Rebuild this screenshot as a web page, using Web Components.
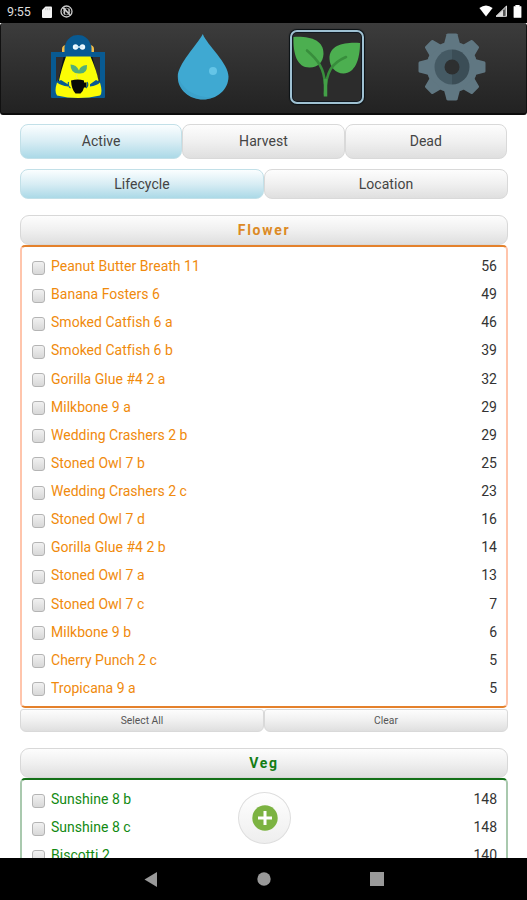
<!DOCTYPE html>
<html lang="en">
<head>
<meta charset="utf-8">
<title>Plants</title>
<style>
html,body{margin:0;height:100%;overflow:hidden}
body{font-family:Roboto,"Liberation Sans",sans-serif;background:#fff}
</style>
</head>
<body>
<plant-app></plant-app>
<script>
function define(name, html, setup) {
  const template = document.createElement('template');
  template.innerHTML = html;
  customElements.define(name, class extends HTMLElement {
    constructor() {
      super();
      this.attachShadow({mode: 'open'}).append(template.content.cloneNode(true));
    }
    connectedCallback() { if (setup) setup(this, this.shadowRoot); }
  });
}

define('status-bar', `<style>
:host{display:flex;height:23px;background:#000;color:#ddd;align-items:center;box-sizing:border-box;padding:0 5px 0 7px;font-size:12.5px;line-height:23px}
.time{width:35px;letter-spacing:-.1px}.left{flex:1;display:flex;gap:8px;align-items:center}
svg{display:block}.right{display:flex;gap:2px;align-items:center;margin-top:-1px}
</style><span class="time">9:55</span>
<div class="left"><svg width="10" height="12" viewBox="0 0 10 12"><path d="M3.5.5H9q1 0 1 1v9.500q0 1-1 1H1q-1 0-1-1V4z" fill="#f4f4f4"/><path d="M3.800 2v2.200M5.800 2v2.200M7.800 2v2.200" stroke="#bbb" stroke-width=".8"/></svg>
<svg width="13" height="13" viewBox="0 0 13 13" fill="none" stroke="#ccc"><circle cx="6.500" cy="6.500" r="5.500" stroke-width="1.300"/><path d="M2.500 2.500l8 8M4.500 9.500v-6l4.500 5.500v-5.500" stroke-width="1.300"/><circle cx="6.500" cy="6.500" r="3.300" stroke-width=".6"/></svg></div>
<div class="right"><svg width="14" height="12" viewBox="0 0 14 12"><path d="M.4 3Q7-2.200 13.600 3L7 11.500z" fill="#fff"/></svg>
<svg width="13" height="12" viewBox="0 0 13 12"><path d="M1 11.300L11.500 1v10.300z" fill="#888" stroke="#ddd"/><path d="M1 11.500L8 5v6.500z" fill="#ddd"/><path d="M9 5v6" stroke="#222"/></svg>
<svg width="9" height="13" viewBox="0 0 10 13" preserveAspectRatio="none" style="margin-left:3px"><path d="M3 0h4v1.500h2v11H1v-11h2z" fill="#fff" stroke="#fff" stroke-linejoin="round" stroke-width=".6"/></svg></div>`);

define('icon-lantern', `<style>:host{display:block}svg{display:block}</style>
<svg width="56" height="66" viewBox="0 0 56 66">
<path fill="#085a92" d="M1 18h54v45q0 1-1 1H2q-1 0-1-1z"/>
<path fill="#302f31" d="M6 23h10L9 44l-3 4zM40 23h10v25l-3-4z"/>
<path fill="#071318" d="M13.500 23H17L11 45l-3 3zM39 23h3.500l6 25-4-3z"/>
<path fill="#f3bd49" d="M17 11q-5 0-5 4v3h5zM39 11q5 0 5 4v3h-5z"/>
<path fill="#085a92" d="M14.500 20V13C17 4 22 1 28 1s11 3 13.500 12v7z"/>
<circle cx="25.500" cy="13" r="2.700" fill="#edf9ff"/><circle cx="32.500" cy="13" r="2.700" fill="#edf9ff"/><path d="M25 13h8" stroke="#cfe8f5" stroke-width="1.500"/>
<path fill="#fbfd05" d="M16 22.500h24.500q6 14 8 24l-10 6H18l-9-6q2-10 7-24z"/>
<path fill="#085a92" d="M7 48l4-2 8 5h20l7-5 4 2v7q-20 8-43 0z"/>
<path fill="#fbfd05" d="M7 48.500q4 3 11 4v-5h22v5q7-1 10-4 3 10 0 13-22 5-43 0-3-4 0-13z"/>
<path fill="#53ae78" d="M20.500 30.500q6 0 8.500 6 1-5 8-5.500.5 9-7.500 8.500-9 .5-9-9z"/><path d="M28 45q-3-2-1-5" fill="none" stroke="#d9e37b" stroke-width=".8"/>
<path fill="#080b08" d="M21 46.500q7-2 13 0v2h2.500v5H34q-.5 3-3.500 6h-5q-4-4-4.500-13z"/><path d="M18.500 48q-1 4 2 6M37 48q2 3-1 6" fill="none" stroke="#085a92" stroke-width="1.200"/>
</svg>`);
define('icon-drop', `<style>:host{display:block}svg{display:block}</style>
<svg width="52" height="68" viewBox="0 0 52 68"><path fill="#3fa9d2" d="M25.800 1C30 12 51.500 30 51.500 43.500c0 13.500-12 23-25.500 23S.8 57 .8 43.500C.8 31 20 12 25.800 1z"/><path fill="#399cc4" d="M1 39C1 56 21 66 37 64 22 71 3 61 1 47z" opacity=".5"/><circle cx="36" cy="38" r="4" fill="#65c5e7"/></svg>`);
define('icon-sprout', `<style>:host{display:block;box-sizing:border-box;width:74px;height:74px;border:2.500px solid #9fc1d2;border-radius:7px;background:#2c2c2c;box-shadow:0 0 1px 1px #0b1115,inset 0 0 0 1px #101820}svg{display:block}</style>
<svg width="69" height="69" viewBox="0 0 69 69"><path fill="#4caf50" d="M1.500 5C18 4 32 8 31.500 22c-.5 8-5 13.500-14 13.500C5 35.500 1 22 1.500 5zM68 11C54 10 37 12 37.500 27c.5 8 6 14.500 14 14.500C63 41 68 28 68 11z"/>
<path fill="none" stroke="#388e3c" stroke-width="2.600" stroke-linecap="round" d="M15 18.500C26 28 32 36 33 52M54 25C40 31 34 39 33 62"/><path d="M33.500 47v17.500" stroke="#43a047" stroke-width="3.500"/></svg>`);
define('icon-gear', `<style>:host{display:block}svg{display:block}</style>
<svg width="68" height="68" viewBox="-34 -34 68 68"><g class="teeth" fill="#607782"></g><path d="M0-17.500a17.500 17.500 0 0 0 0 35z" fill="#455a64"/><path d="M0-17.500a17.500 17.500 0 0 1 0 35z" fill="#3b4d56"/><circle r="7.500" fill="#2d2f30"/></svg>`,
(el, root) => {
  root.querySelector('.teeth').innerHTML = '<circle r="25.500"/>' + [0,45,90,135,180,225,270,315].map(a => `<path d="M-8-23L-5.500-32.700Q-5-33.500-4-33.500H4Q5-33.500 5.500-32.700L8-23z" transform="rotate(${a})"/>`).join('');
});
define('tool-bar', `<style>:host{display:grid;grid-template-columns:74px 74px 74px 74px;justify-content:space-between;align-items:center;justify-items:center;box-sizing:border-box;height:92px;padding:0 37px 2px 40px;border:1px solid #111;border-top:0;border-bottom:2px solid #0c0c0c;border-radius:3px;background:linear-gradient(#3c3c3c,#222)}</style><slot></slot>`);

define('push-button', `<style>
:host{display:flex;flex:1;align-items:center;justify-content:center;box-sizing:border-box;border:1px solid #d9d9d9;border-radius:8px;background:linear-gradient(#fdfdfd,#f0f0f0 50%,#dfdfdf);color:#444;font-size:14px;letter-spacing:.05px;padding-bottom:1px}
:host([on]){background:linear-gradient(#fbfeff,#d8edf4 50%,#abd9e7);border-color:#c2e0e8}
:host([small]){font-size:10.300px;letter-spacing:0;border-radius:3px 3px 6px 6px;color:#555;padding:0}
</style><slot></slot>`);
define('button-row', `<style>:host{display:flex}</style><slot></slot>`);

define('plant-row', `<style>
:host{display:flex;align-items:center;height:28.130px;padding:0 9px 0 10px;font-size:14px}
i{box-sizing:border-box;width:13px;height:14px;border:1.500px solid #b4b4b4;border-radius:3px;background:linear-gradient(#f1f1f1,#d8d8d8);margin:3px 6px 0 0}
.n{flex:1;color:var(--c);letter-spacing:.02px}.d{color:#333}
</style><i></i><span class="n"></span><span class="d"></span>`, (el, root) => {
  root.querySelector('.n').textContent = el.getAttribute('name');
  root.querySelector('.d').textContent = el.getAttribute('days');
});
define('plant-group', `<style>
:host{display:block}
header{box-sizing:border-box;height:30px;border:1px solid #d8d8d8;border-radius:9px;background:linear-gradient(#fdfdfd,#f0f0f0 50%,#dfdfdf);display:flex;align-items:center;justify-content:center;font-size:14px;font-weight:700;letter-spacing:1.700px;color:var(--h)}
.list{box-sizing:border-box;border:2px solid var(--side);border-top-color:var(--edge);border-bottom-color:var(--edge);border-radius:5px;padding:5px 0 4px}
</style><header></header><div class="list"><slot></slot></div>`, (el, root) => {
  root.querySelector('header').textContent = el.getAttribute('label');
});

define('add-button', `<style>:host{position:absolute;left:238px;top:792px;box-sizing:border-box;width:53px;height:52px;border:1px solid #dedede;border-radius:50%;background:linear-gradient(#fff,#eee);display:flex;align-items:center;justify-content:center}svg{display:block}</style>
<svg width="26" height="26" viewBox="0 0 26 26"><circle cx="13" cy="13" r="12.700" fill="#7cb342"/><path d="M13 6v14M6 13h14" stroke="#fff" stroke-width="3"/></svg>`);
define('nav-bar', `<style>:host{display:flex;height:42px;flex:none;background:#000;align-items:center;justify-content:space-between;padding:0 143px 0 144px}svg{display:block}</style>
<svg width="14" height="15" viewBox="0 0 14 15"><path d="M.5 7.500L13 0v15z" fill="#999"/></svg>
<svg width="14" height="14" viewBox="0 0 14 14"><circle cx="7" cy="7" r="6.700" fill="#999"/></svg>
<svg width="14" height="14" viewBox="0 0 14 14"><path d="M0 0h14v14H0z" fill="#999"/></svg>`);

define('plant-app', `<style>
:host{display:flex;flex-direction:column;width:527px;height:900px;position:relative;overflow:hidden;background:#fff}
status-bar,tool-bar{flex:none}
main{flex:1;min-height:0;overflow:hidden;padding:9px 19px 0 20px}
.state{height:35px;margin-right:1px}.view{height:30px;margin-top:10px}
.flower{--c:#f08a0c;--h:#dc8a24;--side:#ffc5ac;--edge:#e4812c;margin-top:16px}
.veg{--c:#128a12;--h:#147d14;--side:#a9c9ae;--edge:#147018;margin-top:16px}
.actions{height:23px;margin-top:1px}
</style>
<status-bar></status-bar>
<tool-bar><icon-lantern></icon-lantern><icon-drop></icon-drop><icon-sprout></icon-sprout><icon-gear></icon-gear></tool-bar>
<main>
<button-row class="state"><push-button on>Active</push-button><push-button>Harvest</push-button><push-button>Dead</push-button></button-row>
<button-row class="view"><push-button on>Lifecycle</push-button><push-button>Location</push-button></button-row>
<plant-group class="flower" label="Flower">
<plant-row name="Peanut Butter Breath 11" days="56"></plant-row><plant-row name="Banana Fosters 6" days="49"></plant-row><plant-row name="Smoked Catfish 6 a" days="46"></plant-row><plant-row name="Smoked Catfish 6 b" days="39"></plant-row><plant-row name="Gorilla Glue #4 2 a" days="32"></plant-row><plant-row name="Milkbone 9 a" days="29"></plant-row><plant-row name="Wedding Crashers 2 b" days="29"></plant-row><plant-row name="Stoned Owl 7 b" days="25"></plant-row><plant-row name="Wedding Crashers 2 c" days="23"></plant-row><plant-row name="Stoned Owl 7 d" days="16"></plant-row><plant-row name="Gorilla Glue #4 2 b" days="14"></plant-row><plant-row name="Stoned Owl 7 a" days="13"></plant-row><plant-row name="Stoned Owl 7 c" days="7"></plant-row><plant-row name="Milkbone 9 b" days="6"></plant-row><plant-row name="Cherry Punch 2 c" days="5"></plant-row><plant-row name="Tropicana 9 a" days="5"></plant-row>
</plant-group>
<button-row class="actions"><push-button small>Select All</push-button><push-button small>Clear</push-button></button-row>
<plant-group class="veg" label="Veg"><plant-row name="Sunshine 8 b" days="148"></plant-row><plant-row name="Sunshine 8 c" days="148"></plant-row><plant-row name="Biscotti 2" days="140"></plant-row></plant-group>
</main>
<nav-bar></nav-bar>
<add-button></add-button>`);
</script>
</body>
</html>
